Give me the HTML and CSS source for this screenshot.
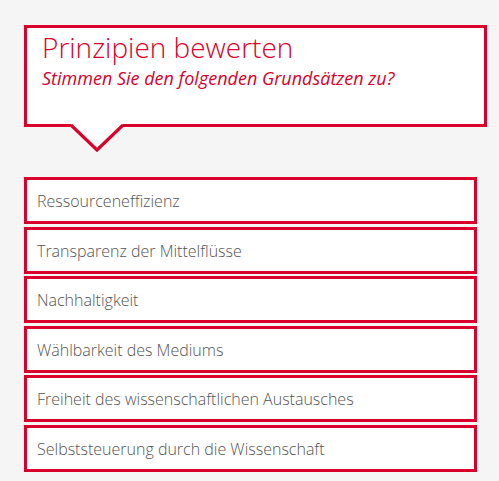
FILE: index.html
```html
<!DOCTYPE html>
<html lang="de">
<head>
<meta charset="utf-8">
<link rel="stylesheet" href="styles.css">
</head>
<body>
<div class="page">
  <div class="bubble">
    <h1 class="title">Prinzipien bewerten</h1>
    <p class="subtitle">Stimmen Sie den folgenden Grundsätzen zu?</p>
    <svg class="pointer" width="60" height="30" viewBox="0 0 60 30">
      <polygon points="2,0 28,25.5 54,0" fill="#ffffff"/>
      <polyline points="2,1 28,26 54,1" fill="none" stroke="#d9002b" stroke-width="3.2"/>
    </svg>
  </div>
  <ul class="list">
    <li class="item">Ressourceneffizienz</li>
    <li class="item">Transparenz der Mittelflüsse</li>
    <li class="item">Nachhaltigkeit</li>
    <li class="item">Wählbarkeit des Mediums</li>
    <li class="item">Freiheit des wissenschaftlichen Austausches</li>
    <li class="item">Selbststeuerung durch die Wissenschaft</li>
  </ul>
</div>
</body>
</html>
```
FILE: styles.css
```css
html, body {
  margin: 0;
  padding: 0;
  background: #f5f5f5;
}
body {
  font-family: "Open Sans", "Liberation Sans", sans-serif;
}
.page {
  padding: 25px 0 0 24px;
}
.bubble {
  position: relative;
  box-sizing: border-box;
  width: 463px;
  height: 102px;
  border: 3px solid #d9002b;
  background: #ffffff;
  padding: 4px 15px 0;
}
.title {
  margin: 0;
  font-size: 28px;
  line-height: 30px;
  font-weight: 300;
  color: #d9002b;
}
.subtitle {
  margin: 5px 0 0;
  font-size: 18px;
  line-height: 22px;
  font-style: italic;
  font-weight: 400;
  color: #d9002b;
}
.pointer {
  position: absolute;
  left: 42px;
  top: 96px;
}
.list {
  list-style: none;
  margin: 50px 0 0;
  padding: 0;
  display: flex;
  flex-direction: column;
  gap: 2.6px;
}
.item {
  box-sizing: border-box;
  width: 453px;
  height: 47px;
  border: 3px solid #d9002b;
  background: #ffffff;
  padding: 1px 10px 0;
  font-size: 16px;
  line-height: 41px;
  font-weight: 300;
  color: #555555;
}
```
